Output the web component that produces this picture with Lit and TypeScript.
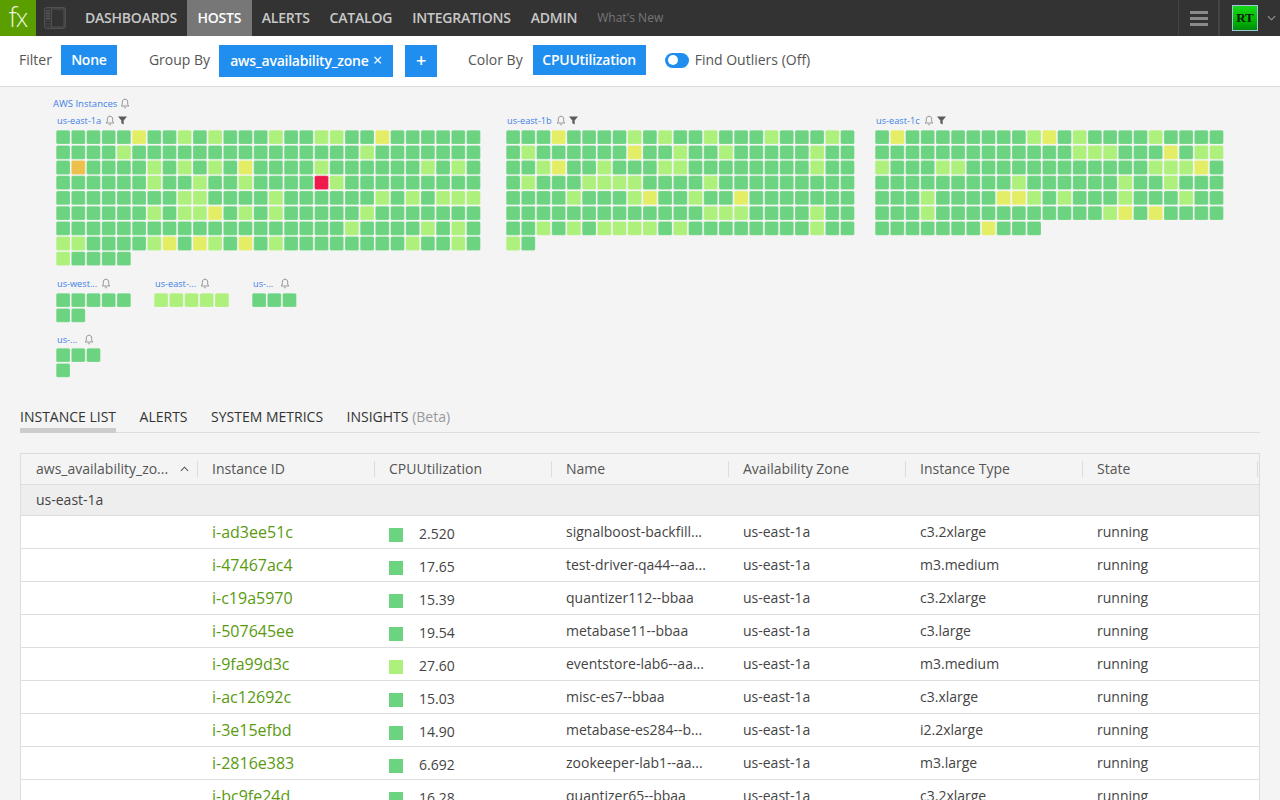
import { LitElement, css, html, svg } from "lit";
import { customElement } from "lit/decorators.js";

// G green, L light green, Y yellow, O orange, R red
const ZONE_1A = [
  "GGGGGYGGLGLGGGLGGLLGGYGGGGGG",
  "GGGGLGGGGGGGGGGGGGGGLGGGGGGG",
  "GOGGGGLGLGLGYGGGGLGGGGGGLGLG",
  "GGGGGGLGGLGGLGGGGRLGGGGGGGGG",
  "GGGGGGGGLLGGGGLGGGGGGLGLGLLL",
  "GGGGGGLGLLYGLGLGGGGGLGGGGGGG",
  "GGGGGGGGGGGGGGGGGGGLGGGGLGLG",
  "LLGGGGLYGYLGYGLGGGGGGGGLGGLG",
  "LGGGG",
];
const ZONE_1B = [
  "GGGYGGGGLGLGGLGGGLGGGLG",
  "GLGGGGGGYGGLGGLGGGGGLGG",
  "GGLYGGLGGGLLGGGGGGGGLGG",
  "GLGGGLLLLGGGGLGGGGGGGGG",
  "GGGGLGGGLYGGLGGYGGGGGGG",
  "GGGGGGGGGGGGGLLLGGGGLGG",
  "GGLGLGLLLLGLGGGGGGGGLGG",
  "LG",
];
const ZONE_1C = [
  "GYGGGGGGGGLYGLGGGGLGGGG",
  "GGGGGGGGGGGGGLLLGGGYGLL",
  "LGGGLLGGGGGGGGGGGGLLLYG",
  "GGGGGGGGGLGGGGGGLGGLGGG",
  "GGGLGGGGYYLGLGGGLGGGLGG",
  "GGGLGGGGGGGGGGGLYGYGGGG",
  "GGGGGGGYGGG",
];

const PITCH = 15.2;
const FILLS: Record<string, string> = {
  G: "#6cd480",
  L: "#aef07c",
  Y: "#e3ee66",
  O: "#ecc04b",
  R: "#ef1a4c",
};

const ROWS = [
  ["i-ad3ee51c", "G", "2.520", "signalboost-backfill...", "c3.2xlarge"],
  ["i-47467ac4", "G", "17.65", "test-driver-qa44--aa...", "m3.medium"],
  ["i-c19a5970", "G", "15.39", "quantizer112--bbaa", "c3.2xlarge"],
  ["i-507645ee", "G", "19.54", "metabase11--bbaa", "c3.large"],
  ["i-9fa99d3c", "L", "27.60", "eventstore-lab6--aa...", "m3.medium"],
  ["i-ac12692c", "G", "15.03", "misc-es7--bbaa", "c3.xlarge"],
  ["i-3e15efbd", "G", "14.90", "metabase-es284--b...", "i2.2xlarge"],
  ["i-2816e383", "G", "6.692", "zookeeper-lab1--aa...", "m3.large"],
  ["i-bc9fe24d", "G", "16.28", "quantizer65--bbaa", "c3.2xlarge"],
];

const bell = html`<svg class="bell" viewBox="0 0 10 11" width="10" height="11">
  <path d="M5 1.2c-1.8 0-2.7 1.3-2.7 3v2.2L1.2 8h7.6L7.7 6.4V4.200c0-1.700-.9-3-2.700-3z" fill="none" stroke="#8c8c8c" stroke-width=".9" />
  <path d="M4 9.300c.3.700 1.700.700 2 0" fill="none" stroke="#8c8c8c" stroke-width=".9" />
</svg>`;

const funnel = html`<svg class="funnel" viewBox="0 0 10 10" width="9" height="9">
  ${svg`<path d="M0 .5h10L6.300 5v4.500L3.700 8V5z" fill="#5c5c5c" />`}
</svg>`;

@customElement("app-root")
export class AppRoot extends LitElement {
  // drawn as svg so the cells keep their fractional pitch instead of snapping to pixels
  private cells(rows: string[], cols: number) {
    return html`<svg class="cells" width=${cols * PITCH} height=${rows.length * PITCH}>
      ${rows.map((row, y) =>
        row.split("").map(
          (c, x) => svg`<rect x=${x * PITCH + 0.2} y=${y * PITCH + 0.2} width="13.8" height="13.8" rx="1.5"
            fill=${FILLS[c]} stroke="#fff" stroke-opacity=".3" stroke-width=".6" />`
        )
      )}
    </svg>`;
  }

  private zone(name: string, rows: string[], opts: { filter?: boolean; short?: boolean; cols?: number } = {}) {
    return html`
      <div class="zone">
        <div class="zone-title">
          <span class="zone-name ${opts.short ? "short" : ""}">${name}</span>
          ${bell} ${opts.filter ? funnel : ""}
        </div>
        ${this.cells(rows, opts.cols ?? rows[0].length)}
      </div>
    `;
  }

  protected override render() {
    return html`
      <header class="nav">
        <div class="logo">f<span>x</span></div>
        <svg class="panel" viewBox="0 0 22 22" width="22" height="22">
          <rect x=".5" y=".5" width="21" height="21" rx="2" fill="#3c3c3c" stroke="#505050" />
          <rect x="7.500" y="2" width="12.500" height="18" fill="#333" stroke="#505050" />
          <path d="M2 4h4M2 6.500h4M2 9h4M2 11.500h4" stroke="#5c5c5c" stroke-width="1" />
        </svg>
        <nav class="nav-items">
          <a>DASHBOARDS</a>
          <a class="active">HOSTS</a>
          <a>ALERTS</a>
          <a>CATALOG</a>
          <a>INTEGRATIONS</a>
          <a>ADMIN</a>
          <a class="whats-new">What's New</a>
        </nav>
        <div class="nav-right">
          <div class="burger"><b></b><b></b><b></b></div>
          <div class="account">
            <div class="avatar"><span>RT</span></div>
            <svg viewBox="0 0 10 6" width="9" height="6">
              <path d="M1 1l4 4 4-4" fill="none" stroke="#999" stroke-width="1.200" />
            </svg>
          </div>
        </div>
      </header>

      <section class="toolbar">
        <span class="label">Filter</span>
        <button class="btn none">None</button>
        <span class="label group-by">Group By</span>
        <button class="btn tall zone-btn">aws_availability_zone <em>×</em></button>
        <button class="btn tall plus">+</button>
        <span class="label color-by">Color By</span>
        <button class="btn cpu">CPUUtilization</button>
        <span class="toggle"><i></i></span>
        <span class="label outliers">Find Outliers (Off)</span>
      </section>

      <section class="map">
        <div class="map-title">AWS Instances ${bell}</div>
        <div class="zones">
          <div class="left">
            ${this.zone("us-east-1a", ZONE_1A, { filter: true })}
            <div class="small">
              ${this.zone("us-west...", ["GGGGG", "GG"], { cols: 5 })}
              ${this.zone("us-east-...", ["LLLLL"], { cols: 5 })}
              ${this.zone("us-...", ["GGG"], { cols: 3, short: true })}
            </div>
            <div class="small">${this.zone("us-...", ["GGG", "G"], { cols: 3, short: true })}</div>
          </div>
          ${this.zone("us-east-1b", ZONE_1B, { filter: true })}
          ${this.zone("us-east-1c", ZONE_1C, { filter: true, cols: 23 })}
        </div>
      </section>

      <section class="lower">
        <div class="tabs">
          <a class="active">INSTANCE LIST</a>
          <a>ALERTS</a>
          <a>SYSTEM METRICS</a>
          <a>INSIGHTS <span>(Beta)</span></a>
        </div>
        <div class="table">
          <div class="row head">
            <div class="sort"><span>aws_availability_zo...</span>
              <svg viewBox="0 0 10 6" width="9" height="6"><path d="M1 5l4-4 4 4" fill="none" stroke="#555" stroke-width="1.200" /></svg>
            </div>
            <div>Instance ID</div>
            <div>CPUUtilization</div>
            <div>Name</div>
            <div>Availability Zone</div>
            <div>Instance Type</div>
            <div>State</div>
          </div>
          <div class="group">us-east-1a</div>
          ${ROWS.map(
            (r) => html`
              <div class="row body">
                <div></div>
                <div class="id">${r[0]}</div>
                <div class="util"><i class="swatch ${r[1]}"></i>${r[2]}</div>
                <div>${r[3]}</div>
                <div>us-east-1a</div>
                <div>${r[4]}</div>
                <div>running</div>
              </div>
            `
          )}
        </div>
      </section>
    `;
  }

  static override styles = css`
    :host {
      display: block;
      width: 1280px;
      height: 800px;
      overflow: hidden;
      background: #f4f4f4;
      font-family: "Open Sans", "DejaVu Sans", sans-serif;
      color: #444;
    }
    .nav {
      display: flex;
      align-items: center;
      height: 36px;
      background: #333;
    }
    .logo {
      width: 36px;
      height: 36px;
      background: #5a9e00;
      color: #e8f2d8;
      font-size: 27px;
      font-weight: 300;
      line-height: 34px;
      text-align: center;
      letter-spacing: -1px;
    }
    .logo span {
      font-size: 25px;
    }
    .panel {
      margin-left: 8px;
    }
    .nav-items {
      display: flex;
      align-items: center;
      height: 36px;
      margin-left: 9px;
    }
    .nav-items a {
      padding: 0 10px;
      font-size: 14px;
      font-weight: 600;
      line-height: 36px;
      letter-spacing: -0.22px;
      color: #c8c8c8;
    }
    .nav-items a.active {
      padding: 0 10.500px;
      background: #777;
      color: #fff;
    }
    .nav-items a.whats-new {
      font-size: 12px;
      font-weight: 400;
      letter-spacing: 0;
      color: #777;
    }
    .nav-right {
      display: flex;
      height: 36px;
      margin-left: auto;
    }
    .burger {
      display: flex;
      flex-direction: column;
      justify-content: center;
      gap: 3px;
      width: 42px;
      padding: 0 10px 0 11px;
      box-sizing: border-box;
      border-left: 1px solid #444;
      border-right: 2px solid #444;
    }
    .burger b {
      height: 3px;
      background: #8a8a8a;
    }
    .account {
      display: flex;
      align-items: center;
      gap: 9px;
      width: 60px;
      padding-left: 12px;
      box-sizing: border-box;
    }
    .avatar {
      display: flex;
      align-items: center;
      justify-content: center;
      width: 26px;
      height: 26px;
      box-sizing: border-box;
      border: 1px solid #9cc8d8;
      background: linear-gradient(#18d818, #00b000 70%, #008a10);
    }
    .avatar span {
      font-family: "Liberation Serif", serif;
      font-size: 13px;
      font-weight: 700;
      color: #0a1a0a;
    }
    .toolbar {
      display: flex;
      align-items: center;
      height: 48px;
      padding: 0 0 2px 19px;
      background: #fff;
      border-bottom: 1px solid #ddd;
    }
    .label {
      margin-bottom: 2px;
      font-size: 14px;
      color: #555;
    }
    .btn {
      height: 30px;
      padding: 0 0 2px;
      border: 0;
      background: #208eee;
      color: #fff;
      font: 600 14px "Open Sans", sans-serif;
      letter-spacing: -0.25px;
    }
    .btn.tall {
      height: 32px;
      margin-top: 2px;
    }
    .btn em {
      margin-left: 1px;
      font-size: 16px;
      font-style: normal;
      font-weight: 400;
    }
    .none {
      width: 56px;
      margin-left: 9px;
    }
    .group-by {
      margin-left: 32px;
    }
    .zone-btn {
      width: 174px;
      margin-left: 9px;
    }
    .plus {
      width: 32px;
      margin-left: 12px;
      font-size: 18px;
    }
    .color-by {
      margin-left: 31px;
    }
    .cpu {
      width: 113px;
      margin-left: 10px;
    }
    .toggle {
      display: flex;
      align-items: center;
      width: 24px;
      height: 15px;
      margin-left: 19px;
      box-sizing: border-box;
      border-radius: 8px;
      background: #208eee;
    }
    .toggle i {
      width: 10px;
      height: 10px;
      margin-left: 3px;
      border-radius: 50%;
      background: #fff;
    }
    .outliers {
      margin-left: 6px;
    }
    .map {
      height: 311px;
      padding-top: 9px;
      box-sizing: border-box;
    }
    .map-title {
      display: flex;
      align-items: center;
      gap: 3px;
      height: 14px;
      margin-left: 53px;
      font-size: 9.500px;
      color: #3d7fe6;
    }
    .zones {
      display: flex;
      align-items: flex-start;
      gap: 19.500px;
      margin: 4px 0 0 56px;
    }
    .left {
      display: flex;
      flex-direction: column;
      width: 430.500px;
    }
    .zone-title {
      display: flex;
      align-items: center;
      gap: 4px;
      height: 13px;
      padding-left: 1px;
      font-size: 9.200px;
      color: #3d7fe6;
    }
    .zone-name.short {
      margin-right: 3px;
    }
    .funnel {
      margin-left: -1px;
    }
    .cells {
      display: block;
      margin-top: 2.500px;
    }
    .small {
      display: flex;
      gap: 22px;
      margin-top: 11px;
    }
    .small + .small {
      margin-top: 9.500px;
    }
    .lower {
      padding: 0 20px;
    }
    .tabs {
      display: flex;
      gap: 23.500px;
      height: 35px;
      border-bottom: 1px solid #ddd;
      box-sizing: border-box;
    }
    .tabs a {
      height: 35px;
      padding-top: 9px;
      box-sizing: border-box;
      font-size: 14px;
      line-height: 20px;
      color: #333;
    }
    .tabs a.active {
      border-bottom: 5px solid #ccc;
    }
    .tabs span {
      color: #999;
    }
    .table {
      margin-top: 20px;
      border: 1px solid #ddd;
      border-width: 1px 1px 0;
      background: #fff;
    }
    .row {
      display: grid;
      grid-template-columns: 176px repeat(5, 177px) 1fr;
      align-items: center;
      height: 33px;
      box-sizing: border-box;
      border-bottom: 1px solid #ddd;
      font-size: 14px;
      color: #444;
    }
    .row > div {
      padding-left: 15px;
      white-space: nowrap;
    }
    .body {
      padding-bottom: 2px;
    }
    .head {
      height: 31px;
      background: #f4f4f4;
      color: #555;
    }
    .head > div {
      height: 16px;
      padding-left: 14px;
      line-height: 16px;
      border-left: 1px solid #ddd;
    }
    .head > div:first-child {
      padding-left: 15px;
      border-left: 0;
    }
    .head > div:last-child {
      border-right: 1px solid #ddd;
      margin-right: 1px;
    }
    .sort {
      display: flex;
      align-items: center;
      justify-content: space-between;
      padding-right: 8px;
    }
    .group {
      height: 31px;
      padding-left: 15px;
      box-sizing: border-box;
      border-bottom: 1px solid #ddd;
      background: #eee;
      font-size: 14px;
      line-height: 29px;
      color: #444;
    }
    .id {
      padding-top: 2px;
      font-size: 16px;
      color: #5a9a10;
    }
    .util {
      display: flex;
      align-items: center;
      padding-top: 5px;
    }
    .swatch {
      width: 14px;
      height: 14px;
      margin: 2px 16px 0 0;
    }
    .G {
      background: #6cd480;
    }
    .L {
      background: #aef07c;
    }
  `;
}
